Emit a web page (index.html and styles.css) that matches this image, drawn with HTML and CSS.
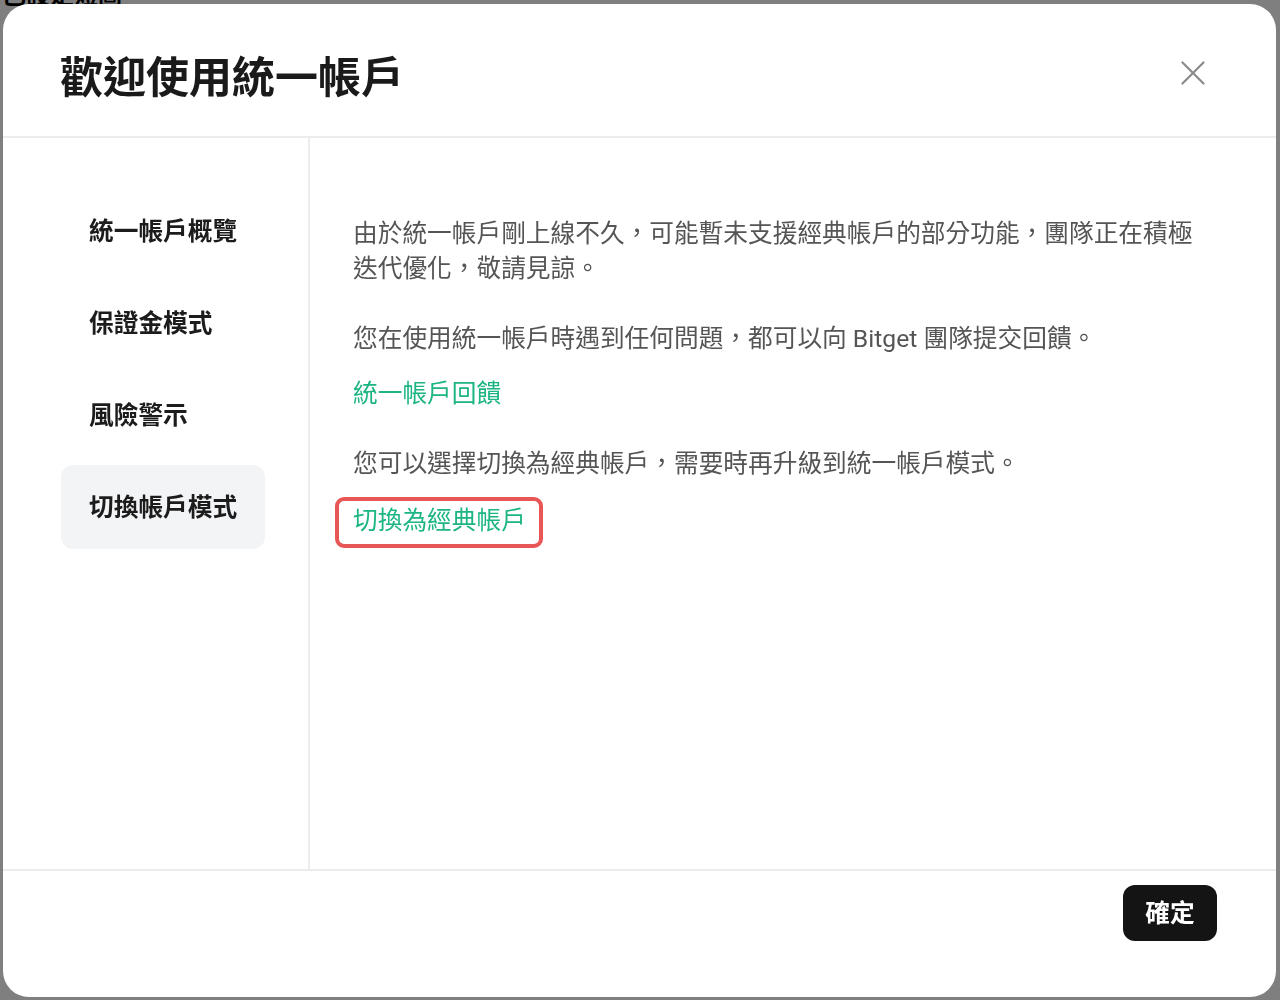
FILE: index.html
```html
<!DOCTYPE html>
<html lang="zh-Hant">
<head>
<meta charset="utf-8">
<title>歡迎使用統一帳戶</title>
<link rel="stylesheet" href="styles.css">
</head>
<body>
<div class="page">
  <div class="page-title">已設定短圖</div>
</div>
<div class="overlay">
  <div class="modal">
    <div class="modal-header">
      <h1 class="modal-title">歡迎使用統一帳戶</h1>
      <button class="close-btn" aria-label="close">
        <svg width="24" height="24" viewBox="0 0 24 24"><path d="M1.5 1.5 L22.5 22.5 M22.5 1.5 L1.5 22.5" stroke="#8a8a8a" stroke-width="2.2" fill="none" stroke-linecap="round"/></svg>
      </button>
    </div>
    <div class="modal-body">
      <nav class="sidebar">
        <div class="nav-item">統一帳戶概覽</div>
        <div class="nav-item">保證金模式</div>
        <div class="nav-item">風險警示</div>
        <div class="nav-item active">切換帳戶模式</div>
      </nav>
      <div class="content">
        <p class="para">由於統一帳戶剛上線不久，可能暫未支援經典帳戶的部分功能，團隊正在積極迭代優化，敬請見諒。</p>
        <p class="para gap-lg">您在使用統一帳戶時遇到任何問題，都可以向 Bitget 團隊提交回饋。</p>
        <a class="link gap-sm">統一帳戶回饋</a>
        <p class="para gap-lg">您可以選擇切換為經典帳戶，需要時再升級到統一帳戶模式。</p>
        <div class="link-row"><a class="link boxed">切換為經典帳戶</a></div>
      </div>
    </div>
    <div class="modal-footer">
      <button class="confirm-btn">確定</button>
    </div>
  </div>
</div>
</body>
</html>
```
FILE: styles.css
```css
* { box-sizing: border-box; }
html, body { margin: 0; padding: 0; }
body {
  background: #ffffff;
  font-family: Roboto, "Noto Sans CJK TC", sans-serif;
  width: 1280px;
  height: 1000px;
  overflow: hidden;
}
.page { padding: 0 0 0 2px; }
.page-title {
  margin-top: -16px;
  font-size: 24px;
  line-height: 24px;
  font-weight: 700;
  color: #000;
}
.overlay {
  position: fixed;
  inset: 0;
  background: rgba(0, 0, 0, 0.5);
  padding: 4px 4px 3px 3px;
  display: flex;
}
.modal {
  flex: 1;
  background: #fff;
  border-radius: 26px;
  display: flex;
  flex-direction: column;
  overflow: hidden;
}
.modal-header {
  height: 134px;
  border-bottom: 2px solid #ececec;
  display: flex;
  align-items: flex-start;
  justify-content: space-between;
  padding: 45px 71px 0 57px;
  flex: none;
}
.modal-title {
  margin: 0;
  font-size: 43px;
  line-height: 58px;
  font-weight: 700;
  color: #1a1a1a;
}
.close-btn {
  margin-top: 12px;
  padding: 0;
  border: 0;
  background: none;
  width: 24px;
  height: 24px;
  display: block;
}
.close-btn svg { display: block; }
.modal-body {
  flex: 1;
  display: flex;
  min-height: 0;
}
.sidebar {
  width: 307px;
  flex: none;
  border-right: 2px solid #ececec;
  padding: 51px 0 0 58px;
  display: flex;
  flex-direction: column;
  gap: 8px;
}
.nav-item {
  width: 204px;
  height: 84px;
  display: flex;
  align-items: center;
  padding: 0 0 5px 28px;
  border-radius: 12px;
  font-size: 24.7px;
  font-weight: 700;
  color: #1c1c1c;
}
.nav-item.active { background: #f3f4f6; }
.content {
  flex: 1;
  padding: 78px 72px 0 43px;
  display: flex;
  flex-direction: column;
  align-items: flex-start;
}
.para {
  margin: 0;
  font-size: 24.7px;
  line-height: 35px;
  color: #555555;
}
.gap-lg { margin-top: 35px; }
.gap-sm { margin-top: 20px; }
.link {
  display: block;
  font-size: 24.7px;
  line-height: 35px;
  color: #1db584;
  text-decoration: none;
}
.link-row { margin-top: 16px; margin-left: -18px; }
.link.boxed {
  display: inline-block;
  border: 4px solid #e95656;
  border-radius: 9px;
  padding: 2px 13px 6px 14px;
}
.modal-footer {
  height: 128px;
  flex: none;
  border-top: 2px solid #ececec;
  display: flex;
  justify-content: flex-end;
  align-items: flex-start;
  padding: 14px 59px 0 0;
}
.confirm-btn {
  width: 94px;
  height: 56px;
  border: 0;
  border-radius: 12px;
  background: #141414;
  color: #fff;
  font-family: Roboto, "Noto Sans CJK TC", sans-serif;
  font-size: 24.7px;
  font-weight: 700;
  padding: 0 0 4px;
}
```
